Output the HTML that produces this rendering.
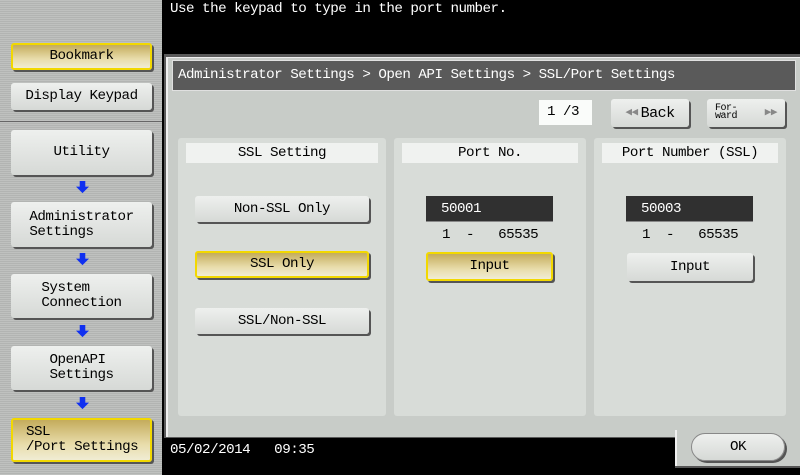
<!DOCTYPE html><html><head><style>
*{margin:0;padding:0;box-sizing:border-box}
body{width:800px;height:475px;background:#000;position:relative;overflow:hidden;font-family:"Liberation Mono",monospace;font-size:14.2px;letter-spacing:-0.5px;color:#000}
.a{position:absolute}
.side{left:0;top:0;width:162px;height:475px;background:repeating-linear-gradient(#bfc1bf 0 1px,#b2b4b2 1px 2px)}
.btn{position:absolute;background:linear-gradient(#eef0ee,#d6d9d6);border-radius:3px;box-shadow:2px 2px 0 #555;display:flex;align-items:center;justify-content:center;text-align:left;line-height:15px}
.y{background:linear-gradient(#c4ac5c,#e8dcaa 60%,#f0ecd4);border:2px solid #f2d800}
.arr{position:absolute;left:76px;width:13px;height:13px}
.pnl{position:absolute;background:#d8dcd8;border-radius:3px}
.lab{position:absolute;background:#f0f2f0;text-align:center;line-height:20px;height:20px}
.fld{position:absolute;background:#303030;color:#fff;height:26px;line-height:26px;padding-left:15px;border-bottom:1px solid #888}
.rng{position:absolute;line-height:14px}
</style></head><body>
<div class="a side"></div>
<div class="a" style="left:0;top:121px;width:162px;height:1px;background:#666"></div>
<div class="a" style="left:170px;top:0;color:#fff;line-height:18px">Use the keypad to type in the port number.</div>
<div class="btn y" style="left:11px;top:43px;width:141px;height:27px">Bookmark</div>
<div class="btn" style="left:11px;top:83px;width:141px;height:27px">Display Keypad</div>
<div class="btn" style="left:11px;top:130px;width:141px;height:45px">Utility</div>
<svg class="arr" style="top:181px" viewBox="0 0 14 14"><path d="M4 0h6v6h4L7 13 0 6h4z" fill="#1030f0"/></svg>
<div class="btn" style="left:11px;top:202px;width:141px;height:45px">Administrator<br>Settings</div>
<svg class="arr" style="top:253px" viewBox="0 0 14 14"><path d="M4 0h6v6h4L7 13 0 6h4z" fill="#1030f0"/></svg>
<div class="btn" style="left:11px;top:274px;width:141px;height:44px">System<br>Connection</div>
<svg class="arr" style="top:325px" viewBox="0 0 14 14"><path d="M4 0h6v6h4L7 13 0 6h4z" fill="#1030f0"/></svg>
<div class="btn" style="left:11px;top:346px;width:141px;height:44px">OpenAPI<br>Settings</div>
<svg class="arr" style="top:397px" viewBox="0 0 14 14"><path d="M4 0h6v6h4L7 13 0 6h4z" fill="#1030f0"/></svg>
<div class="btn y" style="left:11px;top:418px;width:141px;height:44px;justify-content:flex-start;padding-left:13px">SSL<br>/Port Settings</div>

<div class="a" style="left:164px;top:54px;width:636px;height:384px;background:#5a5a5a"></div>
<div class="a" style="left:166px;top:57px;width:634px;height:380px;background:#c8ccc8;border-left:2px solid #f0f0f0;border-top:1px solid #f0f0f0"></div>
<div class="a" style="left:675px;top:430px;width:125px;height:36px;background:#c8ccc8;border-left:2px solid #f0f0f0;box-shadow:0 2px 0 #555"></div>
<div class="a" style="left:172px;top:60px;width:624px;height:31px;background:#5a5a5a;border:1px solid #e0e0e0;color:#fff;line-height:29px;padding-left:5px">Administrator Settings &gt; Open API Settings &gt; SSL/Port Settings</div>
<div class="a" style="left:539px;top:100px;width:53px;height:25px;background:#fafcfa;line-height:25px;padding-left:8px">1 /3</div>
<div class="btn" style="left:611px;top:99px;width:78px;height:28px;font-size:15px"><span style="color:#888;font-size:11px;margin-right:3px">◀◀</span>Back</div>
<div class="btn" style="left:707px;top:99px;width:78px;height:28px;justify-content:space-between;padding:0 8px"><span style="font-size:10px;line-height:8px">For-<br>ward</span><span style="color:#888;font-size:11px">▶▶</span></div>

<div class="pnl" style="left:178px;top:138px;width:208px;height:278px"></div>
<div class="pnl" style="left:394px;top:138px;width:192px;height:278px"></div>
<div class="pnl" style="left:594px;top:138px;width:192px;height:278px"></div>
<div class="lab" style="left:186px;top:143px;width:192px">SSL Setting</div>
<div class="lab" style="left:402px;top:143px;width:176px">Port No.</div>
<div class="lab" style="left:602px;top:143px;width:176px">Port Number (SSL)</div>
<div class="btn" style="left:195px;top:196px;width:174px;height:26px">Non-SSL Only</div>
<div class="btn y" style="left:195px;top:251px;width:174px;height:27px">SSL Only</div>
<div class="btn" style="left:195px;top:308px;width:174px;height:26px">SSL/Non-SSL</div>
<div class="fld" style="left:426px;top:196px;width:127px">50001</div>
<div class="rng" style="left:442px;top:228px">1&nbsp;&nbsp;-&nbsp;&nbsp;&nbsp;65535</div>
<div class="btn y" style="left:426px;top:252px;width:127px;height:29px">Input</div>
<div class="fld" style="left:626px;top:196px;width:127px">50003</div>
<div class="rng" style="left:642px;top:228px">1&nbsp;&nbsp;-&nbsp;&nbsp;&nbsp;65535</div>
<div class="btn" style="left:627px;top:253px;width:126px;height:28px">Input</div>

<div class="a" style="left:170px;top:442px;color:#fff;line-height:16px">05/02/2014&nbsp;&nbsp;&nbsp;09:35</div>
<div class="btn" style="left:691px;top:433px;width:94px;height:28px;border-radius:14px;border:1px solid #888">OK</div>
</body></html>
